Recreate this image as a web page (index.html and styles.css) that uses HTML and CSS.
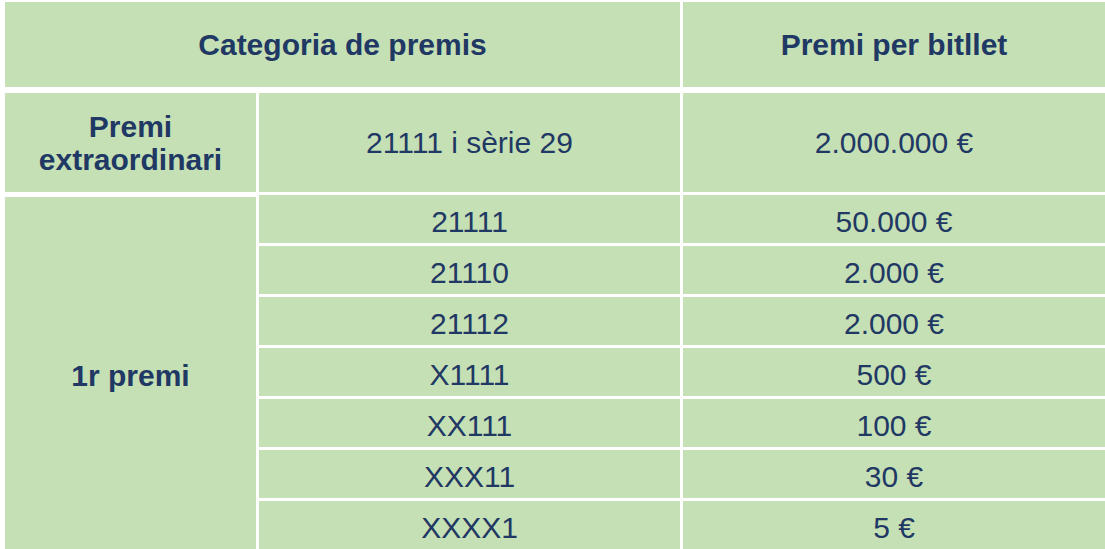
FILE: index.html
```html
<!DOCTYPE html>
<html lang="ca">
<head>
<meta charset="utf-8">
<title>Premis</title>
<link rel="stylesheet" href="styles.css">
</head>
<body>
<div class="table">
  <div class="cell head span2">Categoria de premis</div>
  <div class="cell head">Premi per bitllet</div>

  <div class="cell cat extra">Premi<br>extraordinari</div>
  <div class="cell extra">21111 i sèrie 29</div>
  <div class="cell extra">2.000.000 €</div>

  <div class="cell cat first">1r premi</div>
  <div class="cell row">21111</div>
  <div class="cell row">50.000 €</div>
  <div class="cell row">21110</div>
  <div class="cell row">2.000 €</div>
  <div class="cell row">21112</div>
  <div class="cell row">2.000 €</div>
  <div class="cell row">X1111</div>
  <div class="cell row">500 €</div>
  <div class="cell row">XX111</div>
  <div class="cell row">100 €</div>
  <div class="cell row">XXX11</div>
  <div class="cell row">30 €</div>
  <div class="cell row">XXXX1</div>
  <div class="cell row">5 €</div>
</div>
</body>
</html>
```

FILE: styles.css
```css
html, body {
  margin: 0;
  padding: 0;
  background: #ffffff;
}

body {
  width: 1105px;
  height: 549px;
  overflow: hidden;
}

.table {
  display: grid;
  grid-template-columns: 251px 421px 422px;
  grid-template-rows: 85px 102px repeat(7, 48px);
  column-gap: 3px;
  row-gap: 3px;
  padding: 2px 0 0 5px;
  font-family: "Liberation Sans", Arial, sans-serif;
  font-size: 30px;
  color: #1f3864;
}

.cell {
  background: #c5e0b4;
  display: flex;
  align-items: center;
  justify-content: center;
  text-align: center;
  line-height: 33px;
}

.head {
  font-weight: bold;
}

.span2 {
  grid-column: span 2;
}

.cat {
  font-weight: bold;
}

.extra {
  margin-top: 3px;
}

.row {
  padding-top: 4px;
}

.first {
  grid-row: 3 / span 7;
  margin-top: 2px;
  padding-top: 4px;
}
```
